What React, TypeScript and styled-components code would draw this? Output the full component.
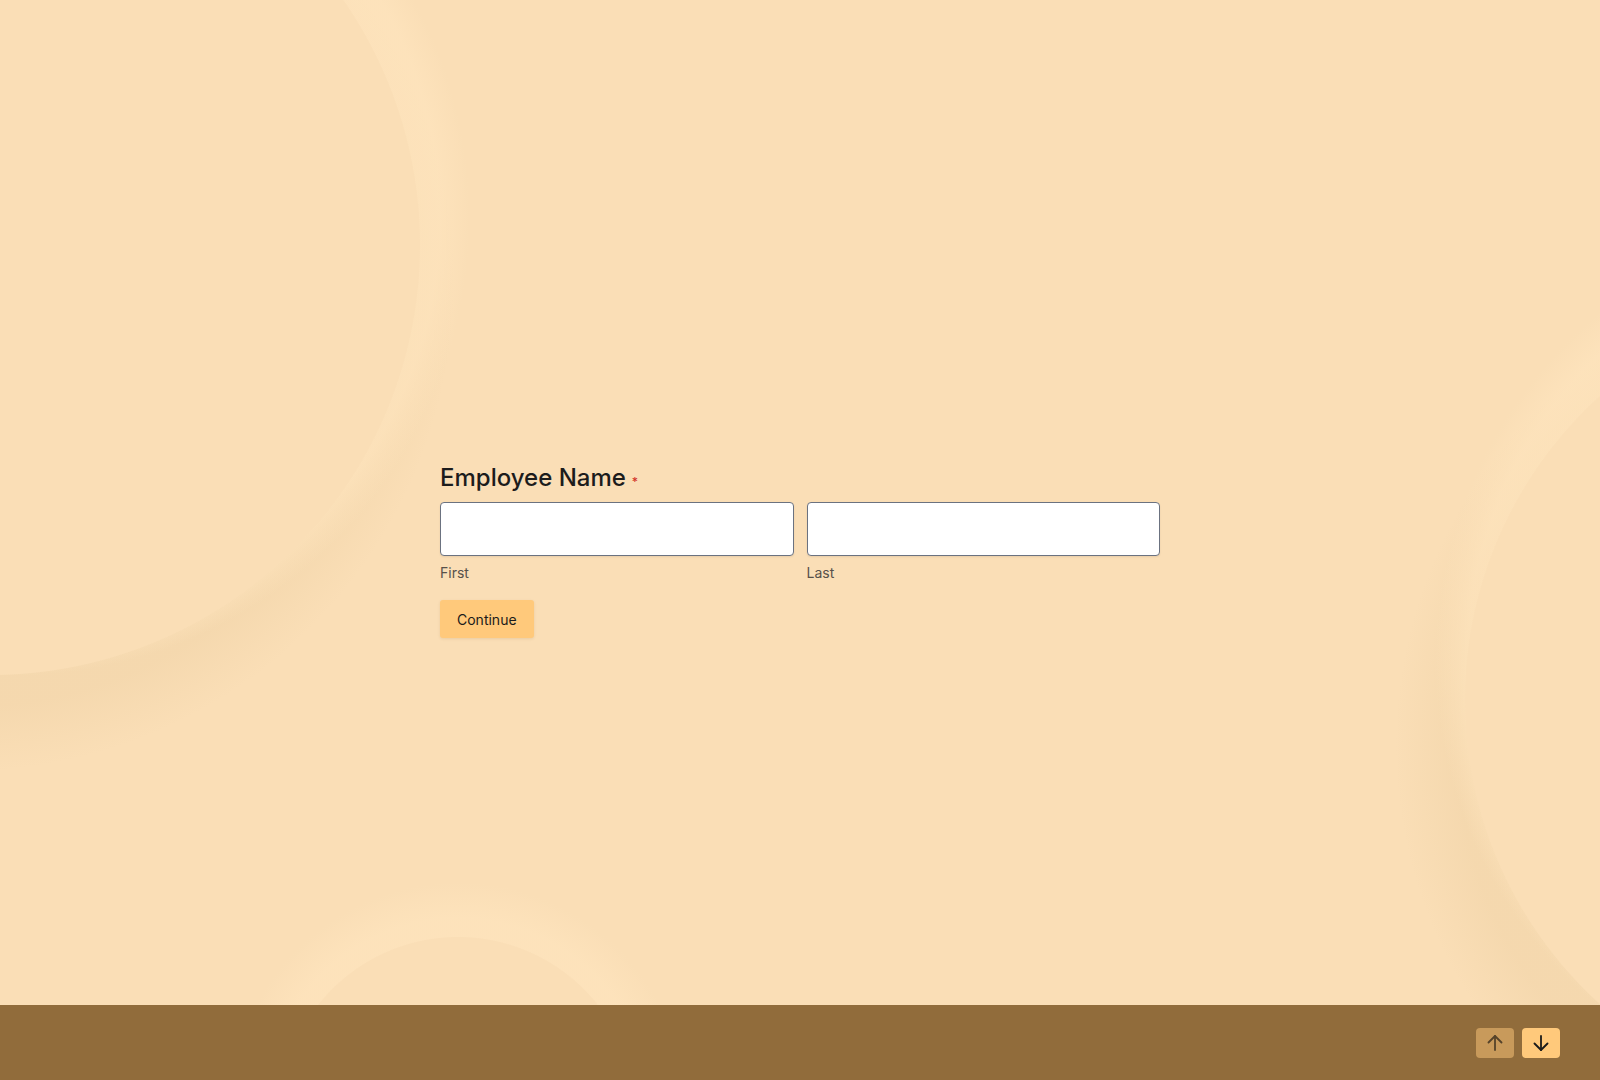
import React from 'react';
import styled, { createGlobalStyle } from 'styled-components';

// Estilos globales
const GlobalStyle = createGlobalStyle`
  html, body {
    margin: 0;
    padding: 0;
  }
  body {
    font-family: Inter, "Noto Sans", "Liberation Sans", sans-serif;
    background-color: #fadeb6;
    color: #1c1c1c;
  }
  * {
    box-sizing: border-box;
  }
`;

const BASE = '#fadeb6';
const LIGHT = 'rgba(254, 228, 189, 0.7)';
const LIGHT_0 = 'rgba(254, 228, 189, 0)';
const SHADE = 'rgba(200, 165, 105, 0.1)';
const SHADE_0 = 'rgba(200, 165, 105, 0)';

// Página completa
const Page = styled.div`
  display: flex;
  flex-direction: column;
  height: 100vh;
  min-height: 1080px;
`;

// Zona principal con los discos decorativos del fondo
const Stage = styled.main`
  flex: 1;
  display: flex;
  justify-content: center;
  padding-top: 462px;
  background-color: ${BASE};
  background-image:
    radial-gradient(circle 430px at -10px 245px, ${BASE} 429.5px, rgba(250, 222, 182, 0) 430.5px),
    radial-gradient(circle 410px at 1875px 700px, ${BASE} 409.5px, rgba(250, 222, 182, 0) 410.5px),
    radial-gradient(circle 178px at 458px 1115px, ${BASE} 177.5px, rgba(250, 222, 182, 0) 178.5px),
    radial-gradient(circle 458px at 12px 218px, ${LIGHT} 428px, ${LIGHT_0} 458px),
    radial-gradient(circle 450px at 1885px 660px, ${LIGHT} 418px, ${LIGHT_0} 450px),
    radial-gradient(circle 228px at 458px 1110px, ${LIGHT} 192px, ${LIGHT_0} 228px),
    radial-gradient(circle 490px at -35px 282px, ${SHADE} 425px, ${SHADE_0} 490px),
    radial-gradient(circle 470px at 1865px 745px, ${SHADE} 408px, ${SHADE_0} 470px);
`;

// Formulario
const Form = styled.form`
  width: 720px;
  display: flex;
  flex-direction: column;
  align-items: flex-start;
`;

const Title = styled.h2`
  margin: 0 0 4px;
  font-size: 24px;
  line-height: 32px;
  font-weight: 450;
  color: #1c1c1c;
`;

const Required = styled.span`
  margin-left: 6px;
  font-size: 12px;
  color: #d3352b;
`;

const Fields = styled.div`
  width: 100%;
  display: grid;
  grid-template-columns: 1fr 1fr;
  gap: 13px;
`;

const Field = styled.label`
  display: flex;
  flex-direction: column;
`;

const Input = styled.input`
  height: 54px;
  width: 100%;
  padding: 0 12px;
  border: 1px solid #6b7280;
  border-radius: 4px;
  background: #ffffff;
  box-shadow: 0 1px 2px rgba(0, 0, 0, 0.08);
  font-family: inherit;
  font-size: 16px;
  outline: none;
`;

const SubLabel = styled.span`
  margin-top: 7px;
  font-size: 14px;
  line-height: 20px;
  color: #57514a;
`;

const ContinueButton = styled.button`
  margin-top: 17px;
  height: 38px;
  padding: 0 17px;
  border: none;
  border-radius: 3px;
  background: #ffc97b;
  box-shadow: 0 1px 3px rgba(120, 80, 20, 0.12);
  font-family: inherit;
  font-size: 14px;
  font-weight: 400;
  color: #1a1a1a;
  cursor: pointer;
`;

// Barra inferior
const Footer = styled.footer`
  height: 75px;
  flex-shrink: 0;
  display: flex;
  justify-content: flex-end;
  align-items: center;
  gap: 8px;
  padding-right: 40px;
  background: #916c3b;
`;

const NavButton = styled.button<{ $disabled?: boolean }>`
  width: 38px;
  height: 30px;
  padding: 0;
  display: flex;
  align-items: center;
  justify-content: center;
  border: none;
  border-radius: 4px;
  background: #ffc97b;
  color: #1a1a1a;
  opacity: ${(p) => (p.$disabled ? 0.5 : 1)};
  cursor: ${(p) => (p.$disabled ? 'default' : 'pointer')};
`;

const Arrow: React.FC<{ dir: 'up' | 'down' }> = ({ dir }) => (
  <svg
    width="16"
    height="16"
    viewBox="0 0 16 16"
    fill="none"
    stroke="currentColor"
    strokeWidth="1.8"
    strokeLinecap="round"
    strokeLinejoin="round"
    style={dir === 'up' ? { transform: 'rotate(180deg)' } : undefined}
  >
    <path d="M8 1v14" />
    <path d="M1.5 8.5 8 15l6.5-6.5" />
  </svg>
);

const App: React.FC = () => {
  return (
    <>
      <GlobalStyle />
      <Page>
        <Stage>
          <Form onSubmit={(e) => e.preventDefault()}>
            <Title>
              Employee Name<Required>*</Required>
            </Title>
            <Fields>
              <Field>
                <Input type="text" />
                <SubLabel>First</SubLabel>
              </Field>
              <Field>
                <Input type="text" />
                <SubLabel>Last</SubLabel>
              </Field>
            </Fields>
            <ContinueButton type="submit">Continue</ContinueButton>
          </Form>
        </Stage>
        <Footer>
          <NavButton $disabled aria-label="Previous">
            <Arrow dir="up" />
          </NavButton>
          <NavButton aria-label="Next">
            <Arrow dir="down" />
          </NavButton>
        </Footer>
      </Page>
    </>
  );
};

export default App;
